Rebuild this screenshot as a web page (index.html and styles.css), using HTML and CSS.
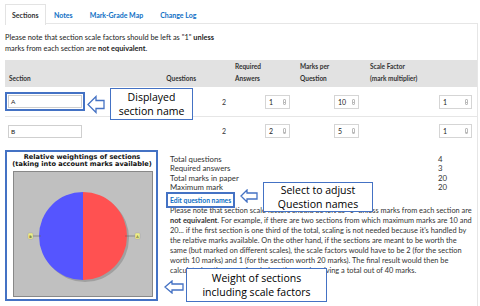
FILE: index.html
```html
<!DOCTYPE html>
<html>
<head>
<meta charset="utf-8">
<link rel="stylesheet" href="styles.css">
</head>
<body>
<div class="page">
  <ul class="tabs">
    <li class="tab active">Sections</li>
    <li class="tab">Notes</li>
    <li class="tab">Mark-Grade Map</li>
    <li class="tab">Change Log</li>
  </ul>
  <div class="panel">
    <p class="intro">Please note that section scale factors should be left as "1" <b>unless</b><br>marks from each section are <b>not equivalent</b>.</p>

    <div class="grid">
      <div class="th c1">Section</div>
      <div class="th c2">Questions</div>
      <div class="th c3">Required<br>Answers</div>
      <div class="th c4">Marks per<br>Question</div>
      <div class="th c5">Scale Factor<br>(mark multiplier)</div>

      <div class="td c1"><span class="txt hl">A</span></div>
      <div class="td c2">2</div>
      <div class="td c3"><span class="num">1<i class="spin"></i></span></div>
      <div class="td c4"><span class="num">10<i class="spin"></i></span></div>
      <div class="td c5"><span class="num wide">1<i class="spin"></i></span></div>

      <div class="td c1 last"><span class="txt">B</span></div>
      <div class="td c2 last">2</div>
      <div class="td c3 last"><span class="num">2<i class="spin"></i></span></div>
      <div class="td c4 last"><span class="num">5<i class="spin"></i></span></div>
      <div class="td c5 last"><span class="num wide">1<i class="spin"></i></span></div>
    </div>

    <div class="lower">
      <div class="chart">
        <div class="chart-title">Relative weightings of sections<br>(taking into account marks available)</div>
        <div class="plot">
          <svg width="140" height="126" viewBox="0 0 140 126">
            <circle cx="72" cy="67" r="44" fill="#8a8a8a" opacity="0.6"/>
            <path d="M70 21 A44 44 0 0 0 70 109 Z" fill="#5555ff"/>
            <path d="M70 21 A44 44 0 0 1 70 109 Z" fill="#ff5151"/>
            <line x1="20" y1="65" x2="28" y2="65" stroke="#666" stroke-width="0.6"/>
            <line x1="112" y1="65" x2="122" y2="65" stroke="#666" stroke-width="0.6"/>
            <rect x="15" y="62" width="5" height="6" rx="1" fill="#eeee88" stroke="#999" stroke-width="0.4"/>
            <rect x="122" y="62" width="5" height="6" rx="1" fill="#eeee88" stroke="#999" stroke-width="0.4"/>
            <text x="17.5" y="66.5" font-size="3.5" text-anchor="middle" font-family="DejaVu Sans">B</text>
            <text x="124.5" y="66.5" font-size="3.5" text-anchor="middle" font-family="DejaVu Sans">A</text>
          </svg>
        </div>
      </div>
      <div class="info">
        <div class="stat"><span>Total questions</span><span class="val">4</span></div>
        <div class="stat"><span>Required answers</span><span class="val">3</span></div>
        <div class="stat"><span>Total marks in paper</span><span class="val">20</span></div>
        <div class="stat"><span>Maximum mark</span><span class="val">20</span></div>
        <div class="link-row"><a class="link hl">Edit question names</a></div>
        <p class="note">Please note that section scale factors should be left as "1" unless marks from each section are<br><b>not equivalent</b>. For example, if there are two sections from which maximum marks are 10 and<br>20... if the first section is one third of the total, scaling is not needed because it's handled by<br>the relative marks available. On the other hand, if the sections are meant to be worth the<br>same (but marked on different scales), the scale factors would have to be 2 (for the section<br>worth 10 marks) and 1 (for the section worth 20 marks). The final result would then be<br>calculated as the sum of scaled section marks, giving a total out of 40 marks.</p>
      </div>
    </div>
  </div>

  <div class="callout co1">Displayed<br>section name</div>
  <svg class="arrow ar1" width="18" height="19" viewBox="0 0 18 19"><path d="M1 9.5 L9 1.5 L9 5.5 L17 5.5 L17 13.5 L9 13.5 L9 17.5 Z" fill="#fff" stroke="#4472c4" stroke-width="1.3" stroke-linejoin="miter"/></svg>

  <div class="callout co2">Select to adjust<br>Question names</div>
  <svg class="arrow ar2" width="18" height="14" viewBox="0 0 18 14"><path d="M1 7 L7 1 L7 4 L17 4 L17 10 L7 10 L7 13 Z" fill="#fff" stroke="#4472c4" stroke-width="1.3"/></svg>

  <div class="callout co3">Weight of sections<br>including scale factors</div>
  <svg class="arrow ar3" width="20" height="14" viewBox="0 0 20 14"><path d="M1 7 L8 1 L8 4 L19 4 L19 10 L8 10 L8 13 Z" fill="#fff" stroke="#4472c4" stroke-width="1.3"/></svg>
</div>
</body>
</html>
```
FILE: styles.css
```css
* { box-sizing: border-box; }
html, body { margin: 0; padding: 0; background: #fff; }
body { font-family: Lato, "Noto Sans", sans-serif; font-size: 7px; color: #333; width: 480px; height: 306px; overflow: hidden; }
.page { position: relative; padding: 4px 2px 0 5px; }

.tabs { list-style: none; margin: 0; padding: 0; display: flex; height: 20px; border-bottom: 1px solid #e6e6e6; }
.tab { padding: 0 7.5px; line-height: 20px; color: #0f6fc5; font-weight: 700; font-size: 7px; border: 1px solid transparent; border-bottom: none; }
.tab.active { color: #333; border-color: #e3e3e3; background: #fff; padding: 0 6px; margin-bottom: -1px; height: 21px; }

.panel { border-right: 1px solid #e6e6e6; padding-top: 8px; height: 290px; }
.intro { margin: 0; line-height: 11px; font-size: 7.4px; color: #222; }
.intro b { font-weight: 700; }

.grid { display: grid; grid-template-columns: 160px 65px 65px 70px 112px; margin-top: 6px; }
.th { background: #e2e2e2; font-weight: 700; color: #333; line-height: 12px; height: 27px; display: flex; align-items: flex-end; padding-bottom: 2px; font-size: 6.5px; }
.th.c1 { padding-left: 4px; }
.th.c2 { justify-content: flex-end; padding-right: 34px; }
.th.c3 { padding-left: 5px; }
.th.c4, .th.c5 { padding-left: 5px; }
.td { height: 30px; display: flex; align-items: center; border-bottom: 1px solid #e6e6e6; color: #333; font-size: 7px; }
.td.last { border-bottom: none; height: 28px; }
.td.c1 { padding-left: 3px; }
.td.c2 { justify-content: flex-end; padding-right: 4px; }
.td.c3 { justify-content: flex-end; padding-right: 5px; }
.td.c4 { justify-content: flex-end; padding-right: 6px; }
.td.c5 { justify-content: flex-end; padding-right: 5px; }

.txt { width: 74px; height: 13px; border: 1px solid #cfcfcf; font-size: 6.5px; line-height: 11px; padding-left: 2px; color: #222; }
.num { position: relative; width: 25px; height: 14px; border: 1px solid #d5d5d5; font-size: 7px; line-height: 12px; padding-left: 3px; color: #222; }
.num.wide { width: 33px; }
.spin { position: absolute; right: 3px; top: 3px; width: 3px; height: 6px; border: 0.5px solid #bbb; border-radius: 1px; }
.spin::before { content: ""; position: absolute; left: 0; right: 0; top: 2.5px; border-top: 0.5px solid #bbb; }

.hl { outline: 2px solid #4472c4; outline-offset: 1px; }

.lower { display: flex; margin-top: 5px; }
.chart { width: 153px; height: 151px; border: 2px solid #4472c4; padding: 2px 3px 0 6px; }
.chart-title { font-family: "DejaVu Sans", sans-serif; font-weight: 700; font-size: 6.6px; line-height: 7px; text-align: center; color: #111; margin: 0 -4px 3px -6px; white-space: nowrap; }
.plot { width: 140px; height: 126px; background: #c0c0c0; border: 1px solid #888; }
.plot svg { display: block; margin: -1px 0 0 -1px; }

.info { flex: 1; padding-left: 12px; padding-top: 5px; font-size: 7.8px; color: #333; }
.stat { display: flex; line-height: 9.4px; }
.stat span:first-child { width: 268px; }
.link-row { line-height: 10px; margin-top: 2px; }
.link { color: #0f6fc5; font-weight: 700; font-size: 6.8px; outline-offset: 2px; }
.note { margin: 1px 0 0 0; line-height: 10px; font-size: 7.4px; color: #333; white-space: nowrap; }

.callout { position: absolute; background: #fff; border: 1.5px solid #4472c4; font-family: "Open Sans", "Noto Sans", sans-serif; font-size: 10.5px; line-height: 14px; color: #000; text-align: center; display: flex; align-items: center; justify-content: center; }
.co1 { left: 110px; top: 88px; width: 83px; height: 32px; }
.co2 { left: 263px; top: 182px; width: 110px; height: 30px; }
.co3 { left: 186px; top: 268px; width: 141px; height: 34px; }
.arrow { position: absolute; }
.ar1 { left: 87px; top: 95px; }
.ar2 { left: 240px; top: 189px; }
.ar3 { left: 164px; top: 280px; }
```
